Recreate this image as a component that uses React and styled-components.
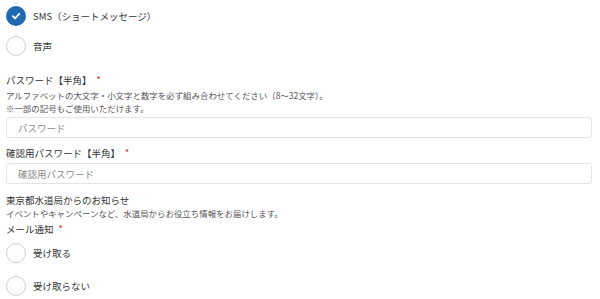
import styled, { createGlobalStyle } from "styled-components";

const GlobalStyle = createGlobalStyle`
  body {
    margin: 0;
    background: #ffffff;
    font-family: "Noto Sans CJK JP", "Noto Sans", sans-serif;
    color: #333333;
  }
`;

const StyledForm = styled.div`
  display: flex;
  flex-direction: column;
  padding: 6px 8px 0 6px;
`;

const RadioGroup = styled.div`
  display: flex;
  flex-direction: column;
  gap: ${(p) => p.gap}px;
  margin-top: ${(p) => p.top || 0}px;
`;

const RadioRow = styled.label`
  display: flex;
  align-items: center;
  height: 20px;
  gap: 7px;
  font-size: 9.5px;
  color: #333333;
`;

const Circle = styled.span`
  box-sizing: border-box;
  width: 20px;
  height: 20px;
  border-radius: 50%;
  display: flex;
  align-items: center;
  justify-content: center;
  border: ${(p) => (p.checked ? "none" : "1.5px solid #cfcfcf")};
  background: ${(p) => (p.checked ? "#1f69b1" : "#ffffff")};
`;

const Label = styled.div`
  font-size: 9.5px;
  line-height: 14px;
  color: #333333;
  margin-top: ${(p) => p.top || 0}px;
  display: flex;
  align-items: flex-start;
  gap: 5px;
`;

const Req = styled.span`
  color: #e0131b;
  font-size: 9px;
  line-height: 14px;
`;

const Note = styled.div`
  font-size: 8.45px;
  line-height: 13px;
  color: #555555;
  margin-top: ${(p) => p.top || 0}px;
`;

const Input = styled.input`
  box-sizing: border-box;
  width: 100%;
  height: 21px;
  margin-top: ${(p) => p.top || 0}px;
  border: 1px solid #e4e4e4;
  border-radius: 3px;
  padding: 0 11px;
  font-family: inherit;
  font-size: 9.5px;
  color: #333333;
  outline: none;
  &::placeholder {
    color: #8a8a8a;
  }
`;

const Radio = ({ checked, children }) => (
  <RadioRow>
    <Circle checked={checked}>
      {checked && (
        <svg width="10" height="10" viewBox="0 0 10 10">
          <path d="M1.8 5.2 L4 7.3 L8.3 2.8" fill="none" stroke="#fff" strokeWidth="1.8" strokeLinecap="round" strokeLinejoin="round" />
        </svg>
      )}
    </Circle>
    <span>{children}</span>
  </RadioRow>
);

const App = () => (
  <>
    <GlobalStyle />
    <StyledForm>
      <RadioGroup gap={9.5}>
        <Radio checked>SMS（ショートメッセージ）</Radio>
        <Radio>音声</Radio>
      </RadioGroup>

      <Label top={17}>
        パスワード【半角】<Req>*</Req>
      </Label>
      <Note top={2}>
        アルファベットの大文字・小文字と数字を必ず組み合わせてください（8～32文字）。
        <br />
        ※一部の記号もご使用いただけます。
      </Note>
      <Input top={2.5} type="password" placeholder="パスワード" />

      <Label top={8}>
        確認用パスワード【半角】<Req>*</Req>
      </Label>
      <Input top={3} type="password" placeholder="確認用パスワード" />

      <Label top={9}>東京都水道局からのお知らせ</Label>
      <Note>イベントやキャンペーンなど、水道局からお役立ち情報をお届けします。</Note>
      <Label top={2}>
        メール通知<Req>*</Req>
      </Label>
      <RadioGroup gap={13} top={6.5}>
        <Radio>受け取る</Radio>
        <Radio>受け取らない</Radio>
      </RadioGroup>
    </StyledForm>
  </>
);

export default App;
